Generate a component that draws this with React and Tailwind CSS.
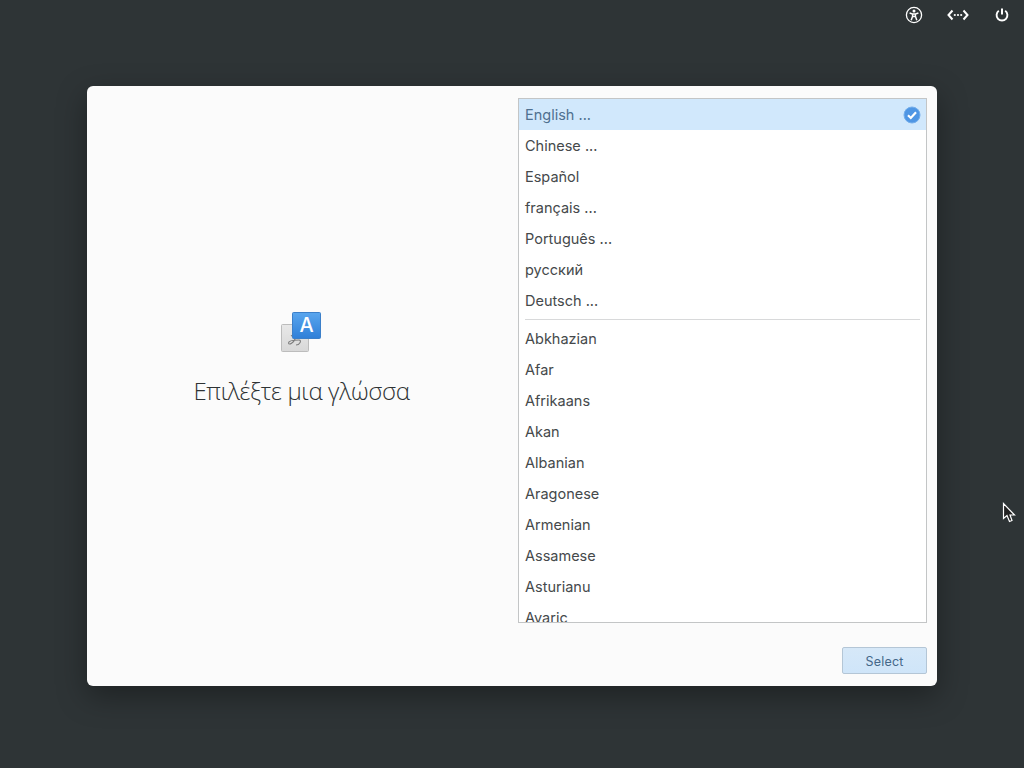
import React from "react";

const top = ["English ...", "Chinese ...", "Español", "français ...", "Português ...", "русский", "Deutsch ..."];
const rest = ["Abkhazian", "Afar", "Afrikaans", "Akan", "Albanian", "Aragonese", "Armenian", "Assamese", "Asturianu", "Avaric"];

function Row({ label, selected }) {
  return (
    <div className={"h-[31px] shrink-0 flex items-center justify-between pl-[6px] pr-[5px] text-[14.5px] leading-none " + (selected ? "bg-[#d1e8fc] text-[#4f7090]" : "text-[#45494b]")}>
      <span className="pt-[2px]">{label}</span>
      {selected && (
        <svg width="18" height="18" viewBox="0 0 18 18">
          <circle cx="9" cy="9" r="8" fill="#4f96e4" stroke="#74aeea" strokeWidth="1" />
          <path d="M5 9.3 L7.8 12 L13 6.2" fill="none" stroke="#ffffff" strokeWidth="2.2" />
        </svg>
      )}
    </div>
  );
}

export default function App() {
  return (
    <div className="relative h-screen w-full overflow-hidden bg-[#2e3436] font-['Inter','Liberation_Sans',sans-serif]">
      <div className="h-[30px] flex items-center justify-end text-white">
        <svg width="18" height="18" viewBox="0 0 18 18" className="mr-[24px]" fill="none" stroke="#fff">
          <circle cx="9" cy="9" r="7.6" strokeWidth="1.3" />
          <circle cx="9" cy="5" r="1.5" fill="#fff" stroke="none" />
          <path d="M4.6 7 L7.6 8 V10.200 L6.200 14.200 M13.400 7 L10.400 8 V10.200 L11.800 14.200 M7.600 8 H10.400 M7.600 10.400 H10.400" strokeWidth="1.5" />
        </svg>
        <svg width="22" height="14" viewBox="0 0 22 14" className="mr-[25px]" fill="none" stroke="#fff">
          <path d="M5.5 2.5 L1.5 7 L5.5 11.5 M16.5 2.5 L20.5 7 L16.5 11.5" strokeWidth="2" />
          <circle cx="7.800" cy="7" r="1.100" fill="#fff" stroke="none" />
          <circle cx="11" cy="7" r="1.100" fill="#fff" stroke="none" />
          <circle cx="14.200" cy="7" r="1.100" fill="#fff" stroke="none" />
        </svg>
        <svg width="16" height="16" viewBox="0 0 16 16" className="mr-[14px]" fill="none" stroke="#fff">
          <path d="M8 1.5 V7.5" strokeWidth="2" />
          <path d="M4.8 3.8 A5.4 5.4 0 1 0 11.2 3.8" strokeWidth="1.9" />
        </svg>
      </div>

      <div className="mt-[56px] ml-[87px] w-[850px] h-[600px] rounded-[6px] bg-[#fbfbfb] flex flex-col shadow-[0_10px_30px_rgba(0,0,0,0.35)] overflow-hidden">
        <div className="flex h-[561px] pt-[12px]">
          <div className="w-[431px] shrink-0 flex flex-col items-center pt-[214px]">
            <svg width="42" height="41" viewBox="0 0 42 41" className="mr-[3px]">
              <defs>
                <linearGradient id="blueA" x1="0" y1="0" x2="0" y2="1">
                  <stop offset="0" stopColor="#5aa6ee" />
                  <stop offset="1" stopColor="#2f7fd8" />
                </linearGradient>
                <linearGradient id="grayA" x1="0" y1="0" x2="0" y2="1">
                  <stop offset="0" stopColor="#e8e8e8" />
                  <stop offset="1" stopColor="#d8d8d8" />
                </linearGradient>
              </defs>
              <rect x="1.500" y="12.500" width="27" height="27" rx="1" fill="url(#grayA)" stroke="#bcbcbc" />
              <path d="M11 24 C14 22 17 23 15 27 C14 30 9 34 8.500 31 C8.500 28 15 28 19 28 C22 28 20 33 16 33" fill="none" stroke="#7d7d7d" strokeWidth="1.100" />
              <rect x="12.500" y="0.500" width="28" height="26" rx="1" fill="url(#blueA)" stroke="#3b7fc9" />
              <text x="26.500" y="20" textAnchor="middle" fill="#ffffff" fontSize="20" fontWeight="500" fontFamily="Inter, sans-serif">A</text>
            </svg>
            <div className="mt-[21px] mr-[2px] text-[24px] leading-[34px] font-light text-[#2e3234] font-['Open_Sans','Noto_Sans',sans-serif] tracking-[-0.35px]">Επιλέξτε μια γλώσσα</div>
          </div>

          <div className="w-[409px] h-[525px] border border-[#c3c5c6] bg-white flex flex-col overflow-hidden">
            {top.map((t, i) => (
              <Row key={t} label={t} selected={i === 0} />
            ))}
            <div className="h-[7px] shrink-0 flex items-center px-[6px]">
              <div className="h-px w-full bg-[#d8d9da]" />
            </div>
            {rest.map((t) => (
              <Row key={t} label={t} />
            ))}
          </div>
        </div>
        <div className="flex justify-end pr-[10px]">
          <button className="w-[85px] h-[27px] pt-[3px] rounded-[2px] border border-[#b4c6d6] bg-gradient-to-b from-[#d6e8f8] to-[#cfe5f9] text-[12.5px] text-[#45688a] tracking-[0.2px]">Select</button>
        </div>
      </div>

      <svg width="14" height="21" viewBox="0 0 14 21" className="absolute left-[1002px] top-[502px]">
        <path d="M1.500 1.500 V16.500 L5 13.500 L7.500 19.500 L10 18.500 L8 13 H12.500 Z" fill="#222" stroke="#fff" strokeWidth="1.200" />
      </svg>
    </div>
  );
}
